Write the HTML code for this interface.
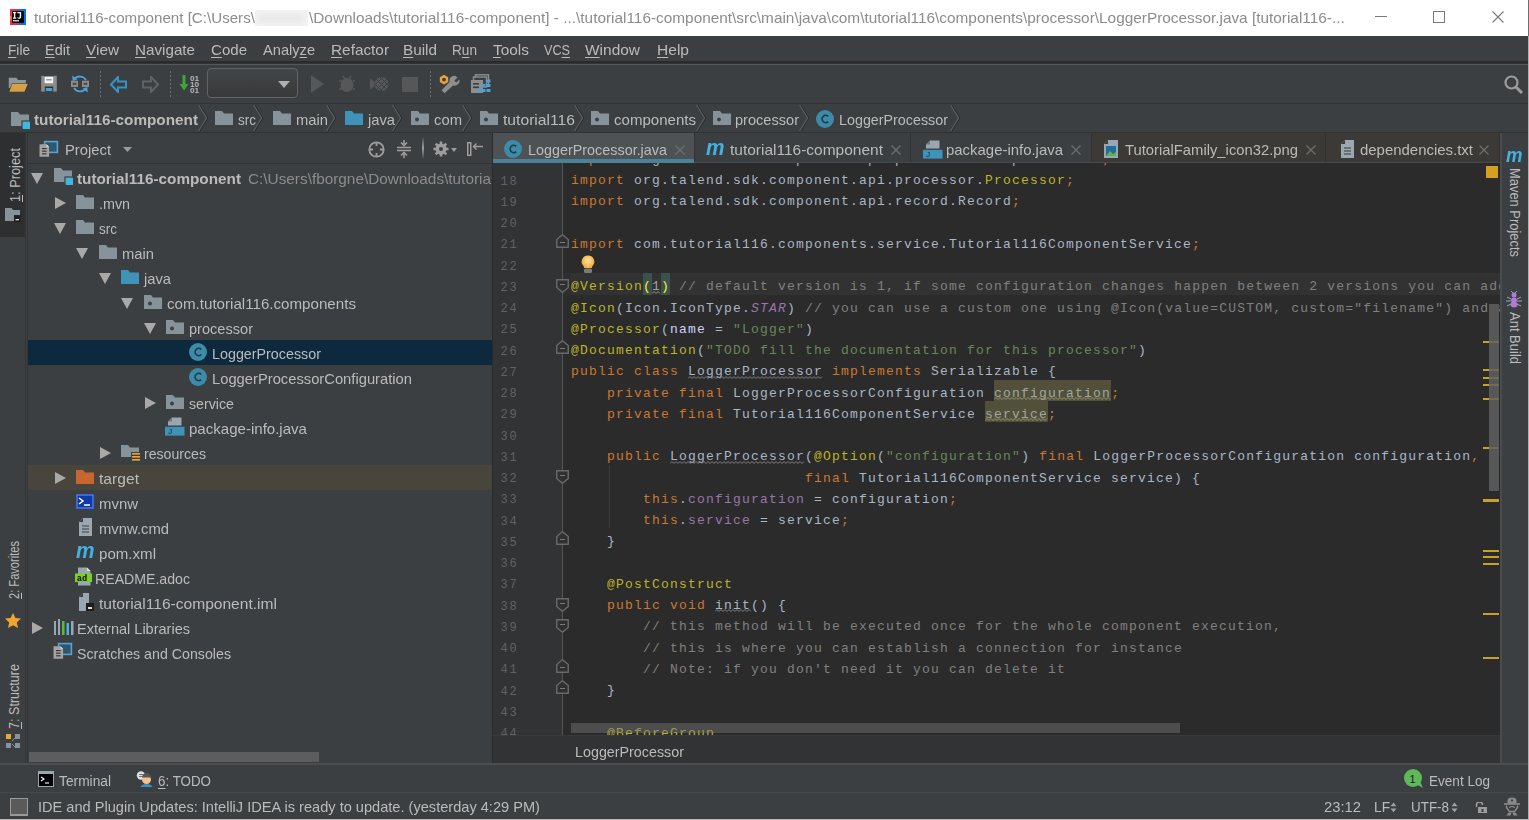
<!DOCTYPE html><html><head><meta charset="utf-8"><style>*{margin:0;padding:0}
html,body{width:1529px;height:820px;overflow:hidden;background:#3c3f41}
body{position:relative;font-family:"Liberation Sans",sans-serif}
body div,body svg{position:absolute;white-space:nowrap}
u{text-decoration:underline;text-underline-offset:2px}
.cl{font-family:"Liberation Mono",monospace;font-size:13px;line-height:15px;letter-spacing:1.2px;white-space:pre}
.wv{text-decoration:underline wavy #707070;text-decoration-thickness:1px;text-underline-offset:3px}
.un{background:#52503a;color:#9a9a88;text-decoration:underline wavy #807a50;text-underline-offset:3px}
</style></head><body><div style="left:0px;top:0px;width:1529px;height:36px;background:#ffffff;"></div>
<svg style="left:10px;top:9px;" width="16" height="16" viewBox="0 0 16 16"><rect x="0" y="0" width="16" height="16" fill="#ee2a5d"/><rect x="8" y="0" width="8" height="16" fill="#0a74f0"/><rect x="0" y="7" width="1.5" height="4" fill="#f28a1a"/><rect x="2" y="2" width="12" height="12" fill="#000"/><path d="M3 3h3.2v1.2H5.3v4.3h0.9v1.2H3V8.5h0.9V4.2H3z" fill="#f4f4f4"/><path d="M7.3 3h3.9v4.5c0 1.6-0.8 2.3-2.2 2.3-0.7 0-1.3-0.2-1.8-0.5l0.4-1.1c0.4 0.2 0.8 0.3 1.2 0.3 0.6 0 0.9-0.3 0.9-1.1V4.2H7.3z" fill="#f4f4f4"/><rect x="3" y="11.2" width="6" height="1.2" fill="#f4f4f4"/></svg>
<div style="left:34px;top:10px;font-family:'Liberation Sans', sans-serif;font-size:15px;line-height:15px;color:#8c8c8c;transform:scaleX(1.0089);transform-origin:0 0;">tutorial116-component [C:\Users\</div>
<div style="left:255px;top:10px;width:53px;height:16px;background:#f3f3f3;"></div>
<div style="left:258px;top:14px;width:46px;height:9px;background:#e9e9e9;filter:blur(2px)"></div>
<div style="left:309px;top:10px;font-family:'Liberation Sans', sans-serif;font-size:15px;line-height:15px;color:#8c8c8c;transform:scaleX(1.0244);transform-origin:0 0;">\Downloads\tutorial116-component] - ...\tutorial116-component\src\main\java\com\tutorial116\components\processor\LoggerProcessor.java [tutorial116-...</div>
<div style="left:1375px;top:16px;width:12px;height:1px;background:#7a7a7a;"></div>
<div style="left:1433px;top:11px;width:12px;height:12px;background:transparent;border:1px solid #7a7a7a;box-sizing:border-box"></div>
<svg style="left:1492px;top:11px;" width="12" height="12" viewBox="0 0 12 12"><path d="M0.5 0.5L11.5 11.5M11.5 0.5L0.5 11.5" stroke="#7a7a7a" stroke-width="1.1"/></svg>
<div style="left:1528px;top:0px;width:1px;height:36px;background:#6e6e6e;"></div>
<div style="left:1528px;top:36px;width:1px;height:784px;background:#b0b0b0;"></div>
<div style="left:0px;top:819px;width:1529px;height:1px;background:#b8b8b8;"></div>
<div style="left:0px;top:36px;width:1528px;height:25px;background:#3c3f41;"></div>
<div style="left:0px;top:61px;width:1528px;height:2px;background:#2b2b2b;"></div>
<div style="left:0px;top:63px;width:1528px;height:1px;background:#313335;"></div>
<div style="left:0px;top:64px;width:1528px;height:1px;background:#555759;"></div>
<div style="left:8px;top:42px;font-family:'Liberation Sans', sans-serif;font-size:15px;line-height:15px;color:#bbbbbb;transform:scaleX(0.9107);transform-origin:0 0;"><u>F</u>ile</div>
<div style="left:45px;top:42px;font-family:'Liberation Sans', sans-serif;font-size:15px;line-height:15px;color:#bbbbbb;transform:scaleX(0.9674);transform-origin:0 0;"><u>E</u>dit</div>
<div style="left:86px;top:42px;font-family:'Liberation Sans', sans-serif;font-size:15px;line-height:15px;color:#bbbbbb;transform:scaleX(1.0238);transform-origin:0 0;"><u>V</u>iew</div>
<div style="left:135px;top:42px;font-family:'Liberation Sans', sans-serif;font-size:15px;line-height:15px;color:#bbbbbb;transform:scaleX(1.0135);transform-origin:0 0;"><u>N</u>avigate</div>
<div style="left:211px;top:42px;font-family:'Liberation Sans', sans-serif;font-size:15px;line-height:15px;color:#bbbbbb;transform:scaleX(1.0039);transform-origin:0 0;"><u>C</u>ode</div>
<div style="left:263px;top:42px;font-family:'Liberation Sans', sans-serif;font-size:15px;line-height:15px;color:#bbbbbb;transform:scaleX(0.9745);transform-origin:0 0;">Analy<u>z</u>e</div>
<div style="left:331px;top:42px;font-family:'Liberation Sans', sans-serif;font-size:15px;line-height:15px;color:#bbbbbb;transform:scaleX(1.0229);transform-origin:0 0;"><u>R</u>efactor</div>
<div style="left:403px;top:42px;font-family:'Liberation Sans', sans-serif;font-size:15px;line-height:15px;color:#bbbbbb;transform:scaleX(1.0197);transform-origin:0 0;"><u>B</u>uild</div>
<div style="left:452px;top:42px;font-family:'Liberation Sans', sans-serif;font-size:15px;line-height:15px;color:#bbbbbb;transform:scaleX(0.9086);transform-origin:0 0;">R<u>u</u>n</div>
<div style="left:493px;top:42px;font-family:'Liberation Sans', sans-serif;font-size:15px;line-height:15px;color:#bbbbbb;transform:scaleX(1.0281);transform-origin:0 0;"><u>T</u>ools</div>
<div style="left:544px;top:42px;font-family:'Liberation Sans', sans-serif;font-size:15px;line-height:15px;color:#bbbbbb;transform:scaleX(0.8434);transform-origin:0 0;">VC<u>S</u></div>
<div style="left:585px;top:42px;font-family:'Liberation Sans', sans-serif;font-size:15px;line-height:15px;color:#bbbbbb;transform:scaleX(1.0310);transform-origin:0 0;"><u>W</u>indow</div>
<div style="left:657px;top:42px;font-family:'Liberation Sans', sans-serif;font-size:15px;line-height:15px;color:#bbbbbb;transform:scaleX(1.0375);transform-origin:0 0;"><u>H</u>elp</div>
<div style="left:0px;top:65px;width:1528px;height:38px;background:#3c3f41;"></div>
<div style="left:0px;top:103px;width:1528px;height:1px;background:#323232;"></div>
<svg style="left:8px;top:77px;" width="21" height="16" viewBox="0 0 21 16"><path d="M0.8 0.8h7.5l1.8 2.2h7.8v8H0.8z" fill="#8d979e"/><path d="M4 6.2h16.6l-3.8 8.6H0.6z" fill="#2f3133"/><path d="M4.3 6.7h15.6l-3.4 8H1.3z" fill="#d6a044"/></svg>
<svg style="left:41px;top:75px;" width="16" height="17" viewBox="0 0 16 17"><rect x="0.2" y="0.8" width="15.6" height="15.8" fill="#8c8c8c"/><rect x="3.6" y="1.2" width="8.6" height="7" fill="#f2f2f2"/><rect x="3" y="0.6" width="9.8" height="0.8" fill="#2f3133"/><rect x="5.2" y="4" width="5.4" height="1.5" fill="#9a9a9a"/><rect x="3.8" y="11.5" width="8.4" height="5.2" fill="#2f3133"/><rect x="4.8" y="13" width="6.4" height="3" fill="#4aa0d8"/></svg>
<svg style="left:70px;top:74px;" width="20" height="20" viewBox="0 0 20 20"><path d="M4.2 5.2A7 6.6 0 0 1 16 6" stroke="#4aa0d8" stroke-width="1.8" fill="none"/><path d="M15.8 14.6A7 6.6 0 0 1 4 14" stroke="#4aa0d8" stroke-width="1.8" fill="none"/><path d="M2.2 1.5l0.5 5.5 4.8-1.8z" fill="#4aa0d8"/><path d="M17.8 18.5l-0.5-5.5-4.8 1.8z" fill="#4aa0d8"/><rect x="1" y="6.7" width="7" height="6.3" fill="#8a8a8a"/><rect x="2.7" y="8.8" width="3.6" height="2" fill="#4a4a4a"/><rect x="12" y="6.7" width="7" height="6.3" fill="#8a8a8a"/><rect x="13.7" y="8.8" width="3.6" height="2" fill="#4a4a4a"/></svg>
<div style="left:100px;top:71px;width:1px;height:27px;background:repeating-linear-gradient(#6e7072 0 2px, transparent 2px 4px)"></div>
<svg style="left:110px;top:76px;" width="17" height="17" viewBox="0 0 17 17"><path d="M8 1L1 8.5 8 16V11.5h8v-6H8z" fill="none" stroke="#3592c4" stroke-width="2"/></svg>
<svg style="left:142px;top:76px;" width="17" height="17" viewBox="0 0 17 17"><path d="M9 1l7 7.5L9 16V11.5H1v-6h8z" fill="none" stroke="#606263" stroke-width="2"/></svg>
<div style="left:170px;top:71px;width:1px;height:27px;background:repeating-linear-gradient(#6e7072 0 2px, transparent 2px 4px)"></div>
<svg style="left:179px;top:74px;" width="22" height="20" viewBox="0 0 22 20"><path d="M3.5 1h3v9h3l-4.5 6.5L0.5 10h3z" fill="#3ca53c"/><g font-family="Liberation Sans" font-weight="bold" font-size="7" fill="#b4b4b4"><text x="11" y="6.6" textLength="9" lengthAdjust="spacingAndGlyphs">01</text><text x="11" y="12.8" textLength="9" lengthAdjust="spacingAndGlyphs">10</text><text x="11" y="19" textLength="9" lengthAdjust="spacingAndGlyphs">01</text></g></svg>
<div style="left:207px;top:68px;width:91px;height:30px;box-sizing:border-box;border:1px solid #646464;border-radius:4px;background:linear-gradient(#434648,#37393b)"></div>
<svg style="left:278px;top:81px;" width="12" height="8" viewBox="0 0 12 8"><path d="M0 0h12L6 7z" fill="#b0b0b0"/></svg>
<svg style="left:311px;top:75px;" width="14" height="18" viewBox="0 0 14 18"><path d="M0 0L13 9 0 18z" fill="#555759"/></svg>
<svg style="left:338px;top:74px;" width="20" height="20" viewBox="0 0 20 20"><ellipse cx="9" cy="11" rx="6.5" ry="7" fill="#555759"/><path d="M11 4a7 7 0 0 1 0 14" stroke="#3c3f41" stroke-width="1.5" fill="none"/><path d="M5 2l2 3M13 2l-2 3M1 7h3M1 15h3M17 7h-2M17 15h-2" stroke="#555759" stroke-width="1.5"/></svg>
<svg style="left:370px;top:75px;" width="19" height="18" viewBox="0 0 19 18"><path d="M0 3L7 9 0 15z" fill="#555759"/><circle cx="11.5" cy="9" r="7" fill="#555759"/><path d="M6 4l11 11M10 2l8 8M4 8l8 8M17 4L6 15M13 2L4 11M18 8l-8 8" stroke="#3c3f41" stroke-width="1"/></svg>
<div style="left:402px;top:77px;width:16px;height:15px;background:#555759;"></div>
<div style="left:430px;top:71px;width:1px;height:27px;background:repeating-linear-gradient(#6e7072 0 2px, transparent 2px 4px)"></div>
<svg style="left:439px;top:74px;" width="21" height="20" viewBox="0 0 21 20"><path d="M18.5 3.5l-3.2 3.2 1.9 1.9 3.2-3.2a5 5 0 0 1-6.3 6.1L5.5 19.2 2.6 16.3l7.9-8.4a5 5 0 0 1 6-6z" fill="#8e8e8e"/><path d="M5 0.8l4.2 2.4v4.8L5 10.4 0.8 8V3.2z" fill="#e8a33a"/><circle cx="5" cy="5.6" r="1.9" fill="#3c3f41"/></svg>
<svg style="left:471px;top:74px;" width="20" height="20" viewBox="0 0 20 20"><rect x="4.5" y="0.8" width="13" height="10" fill="none" stroke="#8e8e8e" stroke-width="1.4"/><rect x="2.5" y="3" width="13" height="10" fill="#3c3f41" stroke="#8e8e8e" stroke-width="1.4"/><rect x="0" y="6" width="12" height="13" fill="#8e8e8e"/><rect x="2" y="9" width="6" height="1.6" fill="#3c3f41"/><rect x="2" y="12.5" width="6" height="1.6" fill="#3c3f41"/><g fill="#4aa0d8"><rect x="15.5" y="5.5" width="4" height="3"/><rect x="10.5" y="10" width="4" height="3"/><rect x="15.5" y="10" width="4" height="3"/><rect x="6" y="15" width="4" height="3"/><rect x="10.5" y="15" width="4" height="3"/><rect x="15.5" y="15" width="4" height="3"/></g></svg>
<svg style="left:1504px;top:75px;" width="20" height="20" viewBox="0 0 20 20"><circle cx="7.5" cy="7.5" r="6" stroke="#9d9d9d" stroke-width="2.2" fill="none"/><path d="M12 12l6 6" stroke="#9d9d9d" stroke-width="3"/></svg>
<div style="left:0px;top:104px;width:1528px;height:28px;background:#3c3f41;"></div>
<div style="left:0px;top:132px;width:1528px;height:1px;background:#323232;"></div>
<svg style="left:11px;top:112px;" width="19" height="17" viewBox="0 0 19 17"><path d="M0 0h7l2 2.5h9V11h-6v3H0z" fill="#87939a"/><rect x="11" y="9" width="8" height="8" fill="#40b6e0"/><rect x="11" y="9" width="8" height="8" fill="none" stroke="#3c3f41" stroke-width="1.2"/><rect x="12" y="10" width="7" height="7" fill="#40b6e0"/></svg>
<div style="left:34px;top:112px;font-family:'Liberation Sans', sans-serif;font-size:15px;line-height:15px;color:#bbbbbb;font-weight:bold;transform:scaleX(1.0195);transform-origin:0 0;">tutorial116-component</div>
<svg style="left:198px;top:104px;" width="12" height="28" viewBox="0 0 12 28"><path d="M1.7 1L9.7 14.0L1.7 27" stroke="#2a2c2e" stroke-width="1.3" fill="none"/><path d="M0.6 1L8.6 14.0L0.6 27" stroke="#5c5e60" stroke-width="1.2" fill="none"/></svg>
<svg style="left:215px;top:111px;" width="18" height="14" viewBox="0 0 18 14"><path d="M0 0h7l2 2.5h9V14H0z" fill="#87939a"/></svg>
<div style="left:238px;top:112px;font-family:'Liberation Sans', sans-serif;font-size:15px;line-height:15px;color:#bbbbbb;transform:scaleX(0.9000);transform-origin:0 0;">src</div>
<svg style="left:253px;top:104px;" width="12" height="28" viewBox="0 0 12 28"><path d="M1.7 1L9.7 14.0L1.7 27" stroke="#2a2c2e" stroke-width="1.3" fill="none"/><path d="M0.6 1L8.6 14.0L0.6 27" stroke="#5c5e60" stroke-width="1.2" fill="none"/></svg>
<svg style="left:273px;top:111px;" width="18" height="14" viewBox="0 0 18 14"><path d="M0 0h7l2 2.5h9V14H0z" fill="#87939a"/></svg>
<div style="left:296px;top:112px;font-family:'Liberation Sans', sans-serif;font-size:15px;line-height:15px;color:#bbbbbb;transform:scaleX(0.9841);transform-origin:0 0;">main</div>
<svg style="left:326px;top:104px;" width="12" height="28" viewBox="0 0 12 28"><path d="M1.7 1L9.7 14.0L1.7 27" stroke="#2a2c2e" stroke-width="1.3" fill="none"/><path d="M0.6 1L8.6 14.0L0.6 27" stroke="#5c5e60" stroke-width="1.2" fill="none"/></svg>
<svg style="left:345px;top:111px;" width="18" height="14" viewBox="0 0 18 14"><path d="M0 0h7l2 2.5h9V14H0z" fill="#3f93b8"/></svg>
<div style="left:368px;top:112px;font-family:'Liberation Sans', sans-serif;font-size:15px;line-height:15px;color:#bbbbbb;transform:scaleX(0.9813);transform-origin:0 0;">java</div>
<svg style="left:392px;top:104px;" width="12" height="28" viewBox="0 0 12 28"><path d="M1.7 1L9.7 14.0L1.7 27" stroke="#2a2c2e" stroke-width="1.3" fill="none"/><path d="M0.6 1L8.6 14.0L0.6 27" stroke="#5c5e60" stroke-width="1.2" fill="none"/></svg>
<svg style="left:411px;top:111px;" width="18" height="14" viewBox="0 0 18 14"><path d="M0 0h7l2 2.5h9V14H0z" fill="#87939a"/><circle cx="6" cy="8.5" r="1.9" fill="#3c3f41"/></svg>
<div style="left:434px;top:112px;font-family:'Liberation Sans', sans-serif;font-size:15px;line-height:15px;color:#bbbbbb;transform:scaleX(0.9879);transform-origin:0 0;">com</div>
<svg style="left:462px;top:104px;" width="12" height="28" viewBox="0 0 12 28"><path d="M1.7 1L9.7 14.0L1.7 27" stroke="#2a2c2e" stroke-width="1.3" fill="none"/><path d="M0.6 1L8.6 14.0L0.6 27" stroke="#5c5e60" stroke-width="1.2" fill="none"/></svg>
<svg style="left:480px;top:111px;" width="18" height="14" viewBox="0 0 18 14"><path d="M0 0h7l2 2.5h9V14H0z" fill="#87939a"/><circle cx="6" cy="8.5" r="1.9" fill="#3c3f41"/></svg>
<div style="left:503px;top:112px;font-family:'Liberation Sans', sans-serif;font-size:15px;line-height:15px;color:#bbbbbb;transform:scaleX(1.0442);transform-origin:0 0;">tutorial116</div>
<svg style="left:574px;top:104px;" width="12" height="28" viewBox="0 0 12 28"><path d="M1.7 1L9.7 14.0L1.7 27" stroke="#2a2c2e" stroke-width="1.3" fill="none"/><path d="M0.6 1L8.6 14.0L0.6 27" stroke="#5c5e60" stroke-width="1.2" fill="none"/></svg>
<svg style="left:591px;top:111px;" width="18" height="14" viewBox="0 0 18 14"><path d="M0 0h7l2 2.5h9V14H0z" fill="#87939a"/><circle cx="6" cy="8.5" r="1.9" fill="#3c3f41"/></svg>
<div style="left:614px;top:112px;font-family:'Liberation Sans', sans-serif;font-size:15px;line-height:15px;color:#bbbbbb;transform:scaleX(1.0032);transform-origin:0 0;">components</div>
<svg style="left:696px;top:104px;" width="12" height="28" viewBox="0 0 12 28"><path d="M1.7 1L9.7 14.0L1.7 27" stroke="#2a2c2e" stroke-width="1.3" fill="none"/><path d="M0.6 1L8.6 14.0L0.6 27" stroke="#5c5e60" stroke-width="1.2" fill="none"/></svg>
<svg style="left:713px;top:111px;" width="18" height="14" viewBox="0 0 18 14"><path d="M0 0h7l2 2.5h9V14H0z" fill="#87939a"/><circle cx="6" cy="8.5" r="1.9" fill="#3c3f41"/></svg>
<div style="left:735px;top:112px;font-family:'Liberation Sans', sans-serif;font-size:15px;line-height:15px;color:#bbbbbb;transform:scaleX(0.9715);transform-origin:0 0;">processor</div>
<svg style="left:799px;top:104px;" width="12" height="28" viewBox="0 0 12 28"><path d="M1.7 1L9.7 14.0L1.7 27" stroke="#2a2c2e" stroke-width="1.3" fill="none"/><path d="M0.6 1L8.6 14.0L0.6 27" stroke="#5c5e60" stroke-width="1.2" fill="none"/></svg>
<svg style="left:816px;top:110px;" width="18" height="18" viewBox="0 0 18 18"><circle cx="9.0" cy="9.0" r="9.0" fill="#3d8aa9"/><path d="M12.2 6.4A3.6 3.6 0 1 0 12.2 11.6" stroke="#1e3c48" stroke-width="1.7" fill="none"/></svg>
<div style="left:839px;top:112px;font-family:'Liberation Sans', sans-serif;font-size:15px;line-height:15px;color:#bbbbbb;transform:scaleX(0.9540);transform-origin:0 0;">LoggerProcessor</div>
<svg style="left:950px;top:104px;" width="12" height="28" viewBox="0 0 12 28"><path d="M1.7 1L9.7 14.0L1.7 27" stroke="#2a2c2e" stroke-width="1.3" fill="none"/><path d="M0.6 1L8.6 14.0L0.6 27" stroke="#5c5e60" stroke-width="1.2" fill="none"/></svg>
<div style="left:0px;top:133px;width:28px;height:632px;background:#3c3f41;"></div>
<div style="left:25px;top:133px;width:1px;height:632px;background:#333537;"></div>
<div style="left:27px;top:133px;width:1px;height:632px;background:#333537;"></div>
<div style="left:0px;top:133px;width:25px;height:104px;background:#2d2f30;"></div>
<div style="left:8.3px;top:202px;font-family:'Liberation Sans';font-size:14px;line-height:14px;color:#bbbbbb;white-space:nowrap;transform-origin:0 0;transform:rotate(-90deg) scaleX(0.9133)"><u>1</u>: Project</div>
<svg style="left:5px;top:208px;" width="16" height="15" viewBox="0 0 16 15"><path d="M0 0h6.5l1.5 2H15v5H9v6H0z" fill="#87939a"/><rect x="9" y="7.5" width="6.5" height="6.5" fill="#1f1f1f"/><rect x="10.5" y="11" width="3.5" height="1.3" fill="#e0e0e0"/></svg>
<div style="left:7.3px;top:599px;font-family:'Liberation Sans';font-size:14px;line-height:14px;color:#bbbbbb;white-space:nowrap;transform-origin:0 0;transform:rotate(-90deg) scaleX(0.7933)"><u>2</u>: Favorites</div>
<svg style="left:5px;top:613px;" width="16" height="15" viewBox="0 0 16 15"><path d="M8 0l2.4 5 5.6.6-4.2 3.8 1.2 5.6L8 12.2 3 15l1.2-5.6L0 5.6 5.6 5z" fill="#f0a732"/></svg>
<div style="left:7.3px;top:729px;font-family:'Liberation Sans';font-size:14px;line-height:14px;color:#bbbbbb;white-space:nowrap;transform-origin:0 0;transform:rotate(-90deg) scaleX(0.8985)"><u>7</u>: Structure</div>
<svg style="left:6px;top:734px;" width="15" height="15" viewBox="0 0 15 15"><rect x="0" y="0" width="5" height="5" fill="#f0a732"/><rect x="9" y="0" width="5" height="5" fill="#87939a"/><rect x="0" y="9" width="5" height="5" fill="#87939a"/><rect x="9" y="9" width="5" height="5" fill="#87939a"/><path d="M6 7l3-3M6 10l3 3" stroke="#87939a" stroke-width="1"/></svg>
<div style="left:28px;top:133px;width:464px;height:632px;background:#3c3f41;"></div>
<div style="left:492px;top:133px;width:1px;height:632px;background:#2b2b2b;"></div>
<div style="left:28px;top:163px;width:463px;height:1px;background:#323232;"></div>
<svg style="left:39px;top:140px;" width="20" height="17" viewBox="0 0 20 17"><rect x="5.6" y="1.6" width="12.8" height="10.8" fill="#2d5670" stroke="#5aa2d2" stroke-width="1.6"/><path d="M0.5 4.2h7l2.6 2.6v9.9H0.5z" fill="#a2a2a2"/><path d="M7.5 4.2v2.6h2.6z" fill="#e0e0e0"/><g fill="#3a3a3a"><rect x="3" y="8" width="4.6" height="1.2"/><rect x="3" y="10.6" width="4.6" height="1.2"/><rect x="3" y="13.2" width="4.6" height="1.2"/></g></svg>
<div style="left:65px;top:142px;font-family:'Liberation Sans', sans-serif;font-size:15px;line-height:15px;color:#bbbbbb;transform:scaleX(0.9853);transform-origin:0 0;">Project</div>
<svg style="left:123px;top:147px;" width="9" height="5" viewBox="0 0 9 5"><path d="M0 0h9L4.5 5z" fill="#9b9b9b"/></svg>
<svg style="left:368px;top:141px;" width="17" height="17" viewBox="0 0 17 17"><circle cx="8.5" cy="8.5" r="7.2" stroke="#9d9d9d" stroke-width="1.8" fill="none"/><path d="M8.5 1v4M8.5 12v4M1 8.5h4M12 8.5h4" stroke="#9d9d9d" stroke-width="1.8"/></svg>
<svg style="left:397px;top:140px;" width="14" height="18" viewBox="0 0 14 18"><path d="M0 7.5h14M0 10.5h14" stroke="#9d9d9d" stroke-width="1.5"/><path d="M7 0v4M4 2.5l3 3 3-3M7 18v-4M4 15.5l3-3 3 3" stroke="#9d9d9d" stroke-width="1.6" fill="none"/></svg>
<div style="left:422px;top:137px;width:2px;height:22px;background:linear-gradient(#3c3f41,#9d9d9d,#3c3f41)"></div>
<svg style="left:433px;top:141px;" width="16" height="16" viewBox="0 0 16 16"><circle cx="8" cy="8" r="5.5" fill="#9d9d9d"/><path d="M8 0.5v15M0.5 8h15M2.7 2.7l10.6 10.6M13.3 2.7L2.7 13.3" stroke="#9d9d9d" stroke-width="2.6"/><circle cx="8" cy="8" r="2" fill="#3c3f41"/></svg>
<svg style="left:451px;top:148px;" width="6" height="4" viewBox="0 0 6 4"><path d="M0 0h6L3 4z" fill="#9d9d9d"/></svg>
<svg style="left:467px;top:142px;" width="17" height="14" viewBox="0 0 17 14"><rect x="0.75" y="0.75" width="3" height="12.5" stroke="#9d9d9d" stroke-width="1.5" fill="none"/><path d="M6 4.5h10M9.5 1.5L6.5 4.5l3 3" stroke="#9d9d9d" stroke-width="1.4" fill="none"/></svg>
<div style="left:28px;top:340px;width:464px;height:25px;background:#0d293e;"></div>
<div style="left:28px;top:465px;width:464px;height:25px;background:#48453d;"></div>
<svg style="left:31px;top:173px;" width="12" height="11" viewBox="0 0 12 11"><path d="M0 0h12L6 11z" fill="#a9a9a9"/></svg>
<svg style="left:54px;top:168px;" width="19" height="17" viewBox="0 0 19 17"><path d="M0 0h7l2 2.5h9V11h-6v3H0z" fill="#87939a"/><rect x="11" y="9" width="8" height="8" fill="#40b6e0"/><rect x="11" y="9" width="8" height="8" fill="none" stroke="#3c3f41" stroke-width="1.2"/><rect x="12" y="10" width="7" height="7" fill="#40b6e0"/></svg>
<div style="left:77px;top:171px;font-family:'Liberation Sans', sans-serif;font-size:15px;line-height:15px;color:#bbbbbb;font-weight:bold;transform:scaleX(1.0195);transform-origin:0 0;">tutorial116-component</div>
<div style="left:248px;top:171px;font-family:'Liberation Sans', sans-serif;font-size:15px;line-height:15px;color:#8c8c8c;transform:scaleX(1.0225);transform-origin:0 0;">C:\Users\fborgne\Downloads\tutoria</div>
<svg style="left:55px;top:197px;" width="11" height="12" viewBox="0 0 11 12"><path d="M0 0L11 6 0 12z" fill="#a9a9a9"/></svg>
<svg style="left:76px;top:195px;" width="18" height="14" viewBox="0 0 18 14"><path d="M0 0h7l2 2.5h9V14H0z" fill="#87939a"/></svg>
<div style="left:98.5px;top:196px;font-family:'Liberation Sans', sans-serif;font-size:15px;line-height:15px;color:#bbbbbb;transform:scaleX(0.9534);transform-origin:0 0;">.mvn</div>
<svg style="left:54px;top:223px;" width="12" height="11" viewBox="0 0 12 11"><path d="M0 0h12L6 11z" fill="#a9a9a9"/></svg>
<svg style="left:76px;top:220px;" width="18" height="14" viewBox="0 0 18 14"><path d="M0 0h7l2 2.5h9V14H0z" fill="#87939a"/></svg>
<div style="left:98.5px;top:221px;font-family:'Liberation Sans', sans-serif;font-size:15px;line-height:15px;color:#bbbbbb;transform:scaleX(0.9000);transform-origin:0 0;">src</div>
<svg style="left:76px;top:248px;" width="12" height="11" viewBox="0 0 12 11"><path d="M0 0h12L6 11z" fill="#a9a9a9"/></svg>
<svg style="left:99px;top:245px;" width="18" height="14" viewBox="0 0 18 14"><path d="M0 0h7l2 2.5h9V14H0z" fill="#87939a"/></svg>
<div style="left:121.5px;top:246px;font-family:'Liberation Sans', sans-serif;font-size:15px;line-height:15px;color:#bbbbbb;transform:scaleX(0.9841);transform-origin:0 0;">main</div>
<svg style="left:99px;top:273px;" width="12" height="11" viewBox="0 0 12 11"><path d="M0 0h12L6 11z" fill="#a9a9a9"/></svg>
<svg style="left:121px;top:270px;" width="18" height="14" viewBox="0 0 18 14"><path d="M0 0h7l2 2.5h9V14H0z" fill="#3f93b8"/></svg>
<div style="left:143.5px;top:271px;font-family:'Liberation Sans', sans-serif;font-size:15px;line-height:15px;color:#bbbbbb;transform:scaleX(0.9813);transform-origin:0 0;">java</div>
<svg style="left:121px;top:298px;" width="12" height="11" viewBox="0 0 12 11"><path d="M0 0h12L6 11z" fill="#a9a9a9"/></svg>
<svg style="left:144px;top:295px;" width="18" height="14" viewBox="0 0 18 14"><path d="M0 0h7l2 2.5h9V14H0z" fill="#87939a"/><circle cx="6" cy="8.5" r="1.9" fill="#3c3f41"/></svg>
<div style="left:166.5px;top:296px;font-family:'Liberation Sans', sans-serif;font-size:15px;line-height:15px;color:#bbbbbb;transform:scaleX(1.0087);transform-origin:0 0;">com.tutorial116.components</div>
<svg style="left:144px;top:323px;" width="12" height="11" viewBox="0 0 12 11"><path d="M0 0h12L6 11z" fill="#a9a9a9"/></svg>
<svg style="left:166px;top:320px;" width="18" height="14" viewBox="0 0 18 14"><path d="M0 0h7l2 2.5h9V14H0z" fill="#87939a"/><circle cx="6" cy="8.5" r="1.9" fill="#3c3f41"/></svg>
<div style="left:188.5px;top:321px;font-family:'Liberation Sans', sans-serif;font-size:15px;line-height:15px;color:#bbbbbb;transform:scaleX(0.9715);transform-origin:0 0;">processor</div>
<svg style="left:189px;top:343px;" width="18" height="18" viewBox="0 0 18 18"><circle cx="9.0" cy="9.0" r="9.0" fill="#3d8aa9"/><path d="M12.2 6.4A3.6 3.6 0 1 0 12.2 11.6" stroke="#1e3c48" stroke-width="1.7" fill="none"/></svg>
<div style="left:211.5px;top:346px;font-family:'Liberation Sans', sans-serif;font-size:15px;line-height:15px;color:#bbbbbb;transform:scaleX(0.9540);transform-origin:0 0;">LoggerProcessor</div>
<svg style="left:189px;top:368px;" width="18" height="18" viewBox="0 0 18 18"><circle cx="9.0" cy="9.0" r="9.0" fill="#3d8aa9"/><path d="M12.2 6.4A3.6 3.6 0 1 0 12.2 11.6" stroke="#1e3c48" stroke-width="1.7" fill="none"/></svg>
<div style="left:211.5px;top:371px;font-family:'Liberation Sans', sans-serif;font-size:15px;line-height:15px;color:#bbbbbb;transform:scaleX(0.9829);transform-origin:0 0;">LoggerProcessorConfiguration</div>
<svg style="left:145px;top:397px;" width="11" height="12" viewBox="0 0 11 12"><path d="M0 0L11 6 0 12z" fill="#a9a9a9"/></svg>
<svg style="left:166px;top:395px;" width="18" height="14" viewBox="0 0 18 14"><path d="M0 0h7l2 2.5h9V14H0z" fill="#87939a"/><circle cx="6" cy="8.5" r="1.9" fill="#3c3f41"/></svg>
<div style="left:188.5px;top:396px;font-family:'Liberation Sans', sans-serif;font-size:15px;line-height:15px;color:#bbbbbb;transform:scaleX(0.9471);transform-origin:0 0;">service</div>
<svg style="left:165px;top:417px;" width="20" height="19" viewBox="0 0 20 19"><path d="M7 0.5h9.5v8H3V4.5z" fill="#9aa7b0"/><path d="M3 4.5h4v-4z" fill="#6d777d"/><rect x="0" y="9.8" width="19.5" height="8.8" fill="#3e93b8"/><text x="3.2" y="17.3" font-family="Liberation Sans" font-size="8" fill="#1f2d36">J</text></svg>
<div style="left:188.5px;top:421px;font-family:'Liberation Sans', sans-serif;font-size:15px;line-height:15px;color:#bbbbbb;transform:scaleX(1.0035);transform-origin:0 0;">package-info.java</div>
<svg style="left:100px;top:447px;" width="11" height="12" viewBox="0 0 11 12"><path d="M0 0L11 6 0 12z" fill="#a9a9a9"/></svg>
<svg style="left:121px;top:443px;" width="20" height="18" viewBox="0 0 20 18"><path d="M0 2h7l2 2.5h9V14H0z" fill="#87939a"/><rect x="10" y="9" width="9" height="9" fill="#3c3f41"/><g fill="#f0a732"><rect x="11" y="10" width="8" height="1.6"/><rect x="11" y="13" width="8" height="1.6"/><rect x="11" y="16" width="8" height="1.6"/></g></svg>
<div style="left:143.5px;top:446px;font-family:'Liberation Sans', sans-serif;font-size:15px;line-height:15px;color:#bbbbbb;transform:scaleX(0.9412);transform-origin:0 0;">resources</div>
<svg style="left:55px;top:472px;" width="11" height="12" viewBox="0 0 11 12"><path d="M0 0L11 6 0 12z" fill="#a9a9a9"/></svg>
<svg style="left:76px;top:470px;" width="18" height="14" viewBox="0 0 18 14"><path d="M0 0h7l2 2.5h9V14H0z" fill="#c86632"/></svg>
<div style="left:98.5px;top:471px;font-family:'Liberation Sans', sans-serif;font-size:15px;line-height:15px;color:#bbbbbb;transform:scaleX(1.0423);transform-origin:0 0;">target</div>
<svg style="left:76px;top:494px;" width="18" height="15" viewBox="0 0 18 15"><rect x="0" y="0" width="18" height="15" fill="#3b63cc"/><rect x="1.2" y="1.2" width="15.6" height="12.6" fill="#0e3aa8" stroke="#6a8ef0" stroke-width="0.6"/><path d="M3 4l4 3-4 3" stroke="#fff" stroke-width="1.5" fill="none"/><path d="M8 11h6" stroke="#fff" stroke-width="1.5"/></svg>
<div style="left:98.5px;top:496px;font-family:'Liberation Sans', sans-serif;font-size:15px;line-height:15px;color:#bbbbbb;transform:scaleX(0.9956);transform-origin:0 0;">mvnw</div>
<svg style="left:79px;top:518px;" width="13" height="18" viewBox="0 0 13 18"><path d="M4 0h9v18H0V4z" fill="#9aa7b0"/><path d="M0 4h4V0z" fill="#3c3f41"/><g stroke="#3c3f41" stroke-width="1.2"><path d="M3 8h7M3 11h7M3 14h7"/></g></svg>
<div style="left:98.5px;top:521px;font-family:'Liberation Sans', sans-serif;font-size:15px;line-height:15px;color:#bbbbbb;transform:scaleX(0.9879);transform-origin:0 0;">mvnw.cmd</div>
<div style="left:76px;top:540px;font-family:'Liberation Sans', sans-serif;font-size:22px;line-height:22px;color:#43b2e2;font-weight:bold;transform:scaleX(0.9457);transform-origin:0 0;font-style:italic;">m</div>
<div style="left:98.5px;top:546px;font-family:'Liberation Sans', sans-serif;font-size:15px;line-height:15px;color:#bbbbbb;transform:scaleX(1.0055);transform-origin:0 0;">pom.xml</div>
<svg style="left:75px;top:567px;" width="17" height="19" viewBox="0 0 17 19"><path d="M3 0.5h9l3.5 3.5v14.5H3z" fill="#9aa7b0"/><path d="M12 0.5v3.5h3.5z" fill="#e0e0e0"/><rect x="0" y="6.5" width="17" height="8.5" fill="#7fcf2a"/><text x="1.8" y="13.8" font-family="Liberation Mono" font-weight="bold" font-size="8.5" fill="#111">ad</text></svg>
<div style="left:95px;top:571px;font-family:'Liberation Sans', sans-serif;font-size:15px;line-height:15px;color:#bbbbbb;transform:scaleX(0.9419);transform-origin:0 0;">README.adoc</div>
<svg style="left:79px;top:593px;" width="15" height="18" viewBox="0 0 15 18"><path d="M4 0h6v18H0V4z" fill="#9aa7b0"/><path d="M0 4h4V0z" fill="#3c3f41"/><rect x="7" y="10" width="8" height="8" fill="#1e1e1e"/><rect x="9" y="14" width="4" height="2" fill="#ddd"/></svg>
<div style="left:98.5px;top:596px;font-family:'Liberation Sans', sans-serif;font-size:15px;line-height:15px;color:#bbbbbb;transform:scaleX(1.0378);transform-origin:0 0;">tutorial116-component.iml</div>
<svg style="left:32px;top:622px;" width="11" height="12" viewBox="0 0 11 12"><path d="M0 0L11 6 0 12z" fill="#a9a9a9"/></svg>
<svg style="left:54px;top:618px;" width="20" height="18" viewBox="0 0 20 18"><rect x="0" y="3" width="2" height="14" fill="#9aa7b0"/><rect x="4" y="1" width="2" height="16" fill="#9aa7b0"/><rect x="8" y="3" width="2.5" height="14" fill="#62b543"/><rect x="12.5" y="5" width="2.5" height="12" fill="#40b6e0"/><rect x="17" y="3" width="2.5" height="14" fill="#9aa7b0"/></svg>
<div style="left:77px;top:621px;font-family:'Liberation Sans', sans-serif;font-size:15px;line-height:15px;color:#bbbbbb;transform:scaleX(0.9680);transform-origin:0 0;">External Libraries</div>
<svg style="left:53px;top:642px;" width="20" height="17" viewBox="0 0 20 17"><rect x="5.6" y="1.6" width="12.8" height="10.8" fill="#2d5670" stroke="#5aa2d2" stroke-width="1.6"/><path d="M0.5 4.2h7l2.6 2.6v9.9H0.5z" fill="#a2a2a2"/><path d="M7.5 4.2v2.6h2.6z" fill="#e0e0e0"/><g fill="#3a3a3a"><rect x="3" y="8" width="4.6" height="1.2"/><rect x="3" y="10.6" width="4.6" height="1.2"/><rect x="3" y="13.2" width="4.6" height="1.2"/></g></svg>
<div style="left:77px;top:646px;font-family:'Liberation Sans', sans-serif;font-size:15px;line-height:15px;color:#bbbbbb;transform:scaleX(0.9471);transform-origin:0 0;">Scratches and Consoles</div>
<div style="left:29px;top:752px;width:290px;height:10px;background:#5c5d5e;"></div>
<div style="left:493px;top:133px;width:1007px;height:30px;background:#3c3f41;"></div>
<div style="left:493px;top:133px;width:201px;height:26px;background:#4e5254;"></div>
<div style="left:493px;top:159px;width:201px;height:4px;background:#4b8299;"></div>
<div style="left:1091px;top:133px;width:409px;height:30px;background:#3b3a36;"></div>
<div style="left:694px;top:133px;width:1px;height:30px;background:#323232;"></div>
<div style="left:910px;top:133px;width:1px;height:30px;background:#323232;"></div>
<div style="left:1091px;top:133px;width:1px;height:30px;background:#323232;"></div>
<div style="left:1325px;top:133px;width:1px;height:30px;background:#323232;"></div>
<div style="left:1499px;top:133px;width:2px;height:30px;background:#323232;"></div>
<div style="left:694px;top:162px;width:806px;height:1px;background:#46484a;"></div>
<svg style="left:504px;top:140px;" width="18" height="18" viewBox="0 0 18 18"><circle cx="9.0" cy="9.0" r="9.0" fill="#3d8aa9"/><path d="M12.2 6.4A3.6 3.6 0 1 0 12.2 11.6" stroke="#1e3c48" stroke-width="1.7" fill="none"/></svg>
<div style="left:528px;top:142px;font-family:'Liberation Sans', sans-serif;font-size:15px;line-height:15px;color:#bbbbbb;transform:scaleX(0.9579);transform-origin:0 0;">LoggerProcessor.java</div>
<svg style="left:675px;top:145px;" width="10" height="10" viewBox="0 0 10 10"><path d="M0.5 0.5l9 9M9.5 0.5l-9 9" stroke="#6e6e6e" stroke-width="1.3"/></svg>
<div style="left:706px;top:137px;font-family:'Liberation Sans', sans-serif;font-size:22px;line-height:22px;color:#43b2e2;font-weight:bold;transform:scaleX(0.9457);transform-origin:0 0;font-style:italic;">m</div>
<div style="left:730px;top:142px;font-family:'Liberation Sans', sans-serif;font-size:15px;line-height:15px;color:#bbbbbb;transform:scaleX(1.0325);transform-origin:0 0;">tutorial116-component</div>
<svg style="left:891px;top:145px;" width="10" height="10" viewBox="0 0 10 10"><path d="M0.5 0.5l9 9M9.5 0.5l-9 9" stroke="#6e6e6e" stroke-width="1.3"/></svg>
<svg style="left:923px;top:140px;" width="20" height="19" viewBox="0 0 20 19"><path d="M7 0.5h9.5v8H3V4.5z" fill="#9aa7b0"/><path d="M3 4.5h4v-4z" fill="#6d777d"/><rect x="0" y="9.8" width="19.5" height="8.8" fill="#3e93b8"/><text x="3.2" y="17.3" font-family="Liberation Sans" font-size="8" fill="#1f2d36">J</text></svg>
<div style="left:946px;top:142px;font-family:'Liberation Sans', sans-serif;font-size:15px;line-height:15px;color:#bbbbbb;transform:scaleX(0.9950);transform-origin:0 0;">package-info.java</div>
<svg style="left:1071px;top:145px;" width="10" height="10" viewBox="0 0 10 10"><path d="M0.5 0.5l9 9M9.5 0.5l-9 9" stroke="#6e6e6e" stroke-width="1.3"/></svg>
<svg style="left:1104px;top:140px;" width="14" height="18" viewBox="0 0 14 18"><path d="M4 0h10v18H0V4z" fill="#9aa7b0"/><path d="M0 4h4V0z" fill="#3b3a36"/><rect x="2" y="6" width="10" height="10" fill="#1e6fa0"/><path d="M2 16l4-5 3 3 3-2v4z" fill="#62b543"/></svg>
<div style="left:1125px;top:142px;font-family:'Liberation Sans', sans-serif;font-size:15px;line-height:15px;color:#bbbbbb;transform:scaleX(0.9865);transform-origin:0 0;">TutorialFamily_icon32.png</div>
<svg style="left:1306px;top:145px;" width="10" height="10" viewBox="0 0 10 10"><path d="M0.5 0.5l9 9M9.5 0.5l-9 9" stroke="#6e6e6e" stroke-width="1.3"/></svg>
<svg style="left:1341px;top:140px;" width="13" height="18" viewBox="0 0 13 18"><path d="M4 0h9v18H0V4z" fill="#9aa7b0"/><path d="M0 4h4V0z" fill="#3b3a36"/><g stroke="#3b3a36" stroke-width="1.2"><path d="M3 8h7M3 11h7M3 14h7"/></g></svg>
<div style="left:1360px;top:142px;font-family:'Liberation Sans', sans-serif;font-size:15px;line-height:15px;color:#bbbbbb;transform:scaleX(0.9961);transform-origin:0 0;">dependencies.txt</div>
<svg style="left:1479px;top:145px;" width="10" height="10" viewBox="0 0 10 10"><path d="M0.5 0.5l9 9M9.5 0.5l-9 9" stroke="#6e6e6e" stroke-width="1.3"/></svg>
<div style="left:493px;top:163px;width:1007px;height:572px;background:#2b2b2b;"></div>
<div style="left:493px;top:163px;width:69px;height:572px;background:#313335;"></div>
<div style="left:563px;top:273.3px;width:8px;height:21.25px;background:#2f2f2f;"></div>
<div style="left:571px;top:273.3px;width:929px;height:21.25px;background:#323232;"></div>
<div style="left:561.5px;top:163px;width:1.5px;height:572px;background:#555555;"></div>
<div style="left:609px;top:464.55px;width:1px;height:63.75px;background:#3b3b3b;"></div>
<div style="left:562px;top:163px;width:938px;height:572px;overflow:hidden;z-index:2">
<div class="cl" style="left:9px;top:-11.20px"><span style="color:#cc7832">import </span><span style="color:#a9b7c6">org.talend.sdk.component.api.processor.OutputEmitter</span><span style="color:#cc7832">;</span></div>
<div class="cl" style="left:9px;top:10.05px"><span style="color:#cc7832">import </span><span style="color:#a9b7c6">org.talend.sdk.component.api.processor.</span><span style="color:#bbb529">Processor</span><span style="color:#cc7832">;</span></div>
<div class="cl" style="left:9px;top:31.30px"><span style="color:#cc7832">import </span><span style="color:#a9b7c6">org.talend.sdk.component.api.record.Record</span><span style="color:#cc7832">;</span></div>
<div class="cl" style="left:9px;top:73.80px"><span style="color:#cc7832">import </span><span style="color:#a9b7c6">com.tutorial116.components.service.Tutorial116ComponentService</span><span style="color:#cc7832">;</span></div>
<div class="cl" style="left:9px;top:116.30px"><span style="color:#bbb529">@Version</span><span style="color:#ffef28">(</span><span style="color:#a0a0a0">1</span><span style="color:#ffef28">)</span><span style="color:#808080"> // default version is 1, if some configuration changes happen between 2 versions you can add a migration handler</span></div>
<div class="cl" style="left:9px;top:137.55px"><span style="color:#bbb529">@Icon</span><span style="color:#a9b7c6">(Icon.IconType.</span><span style="color:#9876aa"><i>STAR</i></span><span style="color:#a9b7c6">) </span><span style="color:#808080">// you can use a custom one using @Icon(value=CUSTOM, custom="filename") and add icon</span></div>
<div class="cl" style="left:9px;top:158.80px"><span style="color:#bbb529">@Processor</span><span style="color:#a9b7c6">(</span><span style="color:#d0d0ff">name</span><span style="color:#a9b7c6"> = </span><span style="color:#6a8759">"Logger"</span><span style="color:#a9b7c6">)</span></div>
<div class="cl" style="left:9px;top:180.05px"><span style="color:#bbb529">@Documentation</span><span style="color:#a9b7c6">(</span><span style="color:#6a8759">"TODO fill the documentation for this processor"</span><span style="color:#a9b7c6">)</span></div>
<div class="cl" style="left:9px;top:201.30px"><span style="color:#cc7832">public class </span><span style="color:#a9b7c6">LoggerProcessor </span><span style="color:#cc7832">implements </span><span style="color:#a9b7c6">Serializable {</span></div>
<div class="cl" style="left:9px;top:222.55px"><span style="color:#a9b7c6">    </span><span style="color:#cc7832">private final </span><span style="color:#a9b7c6">LoggerProcessorConfiguration </span><span style="color:#a0a8a0">configuration</span><span style="color:#cc7832">;</span></div>
<div class="cl" style="left:9px;top:243.80px"><span style="color:#a9b7c6">    </span><span style="color:#cc7832">private final </span><span style="color:#a9b7c6">Tutorial116ComponentService </span><span style="color:#a0a8a0">service</span><span style="color:#cc7832">;</span></div>
<div class="cl" style="left:9px;top:286.30px"><span style="color:#a9b7c6">    </span><span style="color:#cc7832">public </span><span style="color:#a9b7c6">LoggerProcessor(</span><span style="color:#bbb529">@Option</span><span style="color:#a9b7c6">(</span><span style="color:#6a8759">"configuration"</span><span style="color:#a9b7c6">) </span><span style="color:#cc7832">final </span><span style="color:#a9b7c6">LoggerProcessorConfiguration configuration</span><span style="color:#cc7832">,</span></div>
<div class="cl" style="left:9px;top:307.55px"><span style="color:#a9b7c6">                          </span><span style="color:#cc7832">final </span><span style="color:#a9b7c6">Tutorial116ComponentService service) {</span></div>
<div class="cl" style="left:9px;top:328.80px"><span style="color:#a9b7c6">        </span><span style="color:#cc7832">this</span><span style="color:#a9b7c6">.</span><span style="color:#9876aa">configuration</span><span style="color:#a9b7c6"> = configuration</span><span style="color:#cc7832">;</span></div>
<div class="cl" style="left:9px;top:350.05px"><span style="color:#a9b7c6">        </span><span style="color:#cc7832">this</span><span style="color:#a9b7c6">.</span><span style="color:#9876aa">service</span><span style="color:#a9b7c6"> = service</span><span style="color:#cc7832">;</span></div>
<div class="cl" style="left:9px;top:371.30px"><span style="color:#a9b7c6">    }</span></div>
<div class="cl" style="left:9px;top:413.80px"><span style="color:#a9b7c6">    </span><span style="color:#bbb529">@PostConstruct</span></div>
<div class="cl" style="left:9px;top:435.05px"><span style="color:#a9b7c6">    </span><span style="color:#cc7832">public void </span><span style="color:#a9b7c6">init() {</span></div>
<div class="cl" style="left:9px;top:456.30px"><span style="color:#808080">        // this method will be executed once for the whole component execution,</span></div>
<div class="cl" style="left:9px;top:477.55px"><span style="color:#808080">        // this is where you can establish a connection for instance</span></div>
<div class="cl" style="left:9px;top:498.80px"><span style="color:#808080">        // Note: if you don't need it you can delete it</span></div>
<div class="cl" style="left:9px;top:520.05px"><span style="color:#a9b7c6">    }</span></div>
<div class="cl" style="left:9px;top:562.55px"><span style="color:#a9b7c6">    </span><span style="color:#bbb529">@BeforeGroup</span></div>
</div>
<div style="left:493px;top:163px;width:69px;height:572px;overflow:hidden">
<div class="cl" style="left:7.5px;top:-9.60px;color:#606366;font-size:12px;letter-spacing:1.8px">17</div>
<div class="cl" style="left:7.5px;top:11.65px;color:#606366;font-size:12px;letter-spacing:1.8px">18</div>
<div class="cl" style="left:7.5px;top:32.90px;color:#606366;font-size:12px;letter-spacing:1.8px">19</div>
<div class="cl" style="left:7.5px;top:54.15px;color:#606366;font-size:12px;letter-spacing:1.8px">20</div>
<div class="cl" style="left:7.5px;top:75.40px;color:#606366;font-size:12px;letter-spacing:1.8px">21</div>
<div class="cl" style="left:7.5px;top:96.65px;color:#606366;font-size:12px;letter-spacing:1.8px">22</div>
<div class="cl" style="left:7.5px;top:117.90px;color:#606366;font-size:12px;letter-spacing:1.8px">23</div>
<div class="cl" style="left:7.5px;top:139.15px;color:#606366;font-size:12px;letter-spacing:1.8px">24</div>
<div class="cl" style="left:7.5px;top:160.40px;color:#606366;font-size:12px;letter-spacing:1.8px">25</div>
<div class="cl" style="left:7.5px;top:181.65px;color:#606366;font-size:12px;letter-spacing:1.8px">26</div>
<div class="cl" style="left:7.5px;top:202.90px;color:#606366;font-size:12px;letter-spacing:1.8px">27</div>
<div class="cl" style="left:7.5px;top:224.15px;color:#606366;font-size:12px;letter-spacing:1.8px">28</div>
<div class="cl" style="left:7.5px;top:245.40px;color:#606366;font-size:12px;letter-spacing:1.8px">29</div>
<div class="cl" style="left:7.5px;top:266.65px;color:#606366;font-size:12px;letter-spacing:1.8px">30</div>
<div class="cl" style="left:7.5px;top:287.90px;color:#606366;font-size:12px;letter-spacing:1.8px">31</div>
<div class="cl" style="left:7.5px;top:309.15px;color:#606366;font-size:12px;letter-spacing:1.8px">32</div>
<div class="cl" style="left:7.5px;top:330.40px;color:#606366;font-size:12px;letter-spacing:1.8px">33</div>
<div class="cl" style="left:7.5px;top:351.65px;color:#606366;font-size:12px;letter-spacing:1.8px">34</div>
<div class="cl" style="left:7.5px;top:372.90px;color:#606366;font-size:12px;letter-spacing:1.8px">35</div>
<div class="cl" style="left:7.5px;top:394.15px;color:#606366;font-size:12px;letter-spacing:1.8px">36</div>
<div class="cl" style="left:7.5px;top:415.40px;color:#606366;font-size:12px;letter-spacing:1.8px">37</div>
<div class="cl" style="left:7.5px;top:436.65px;color:#606366;font-size:12px;letter-spacing:1.8px">38</div>
<div class="cl" style="left:7.5px;top:457.90px;color:#606366;font-size:12px;letter-spacing:1.8px">39</div>
<div class="cl" style="left:7.5px;top:479.15px;color:#606366;font-size:12px;letter-spacing:1.8px">40</div>
<div class="cl" style="left:7.5px;top:500.40px;color:#606366;font-size:12px;letter-spacing:1.8px">41</div>
<div class="cl" style="left:7.5px;top:521.65px;color:#606366;font-size:12px;letter-spacing:1.8px">42</div>
<div class="cl" style="left:7.5px;top:542.90px;color:#606366;font-size:12px;letter-spacing:1.8px">43</div>
<div class="cl" style="left:7.5px;top:564.15px;color:#606366;font-size:12px;letter-spacing:1.8px">44</div>
</div>
<svg style="left:556px;top:233.60px;" width="13" height="14" viewBox="0 0 13 14"><path d="M0.75 13.25V5.5L6.5 0.75 12.25 5.5V13.25z" fill="#303030" stroke="#6a6a6a" stroke-width="1.4"/><path d="M4 8.5h5" stroke="#7a7a7a" stroke-width="1"/></svg>
<svg style="left:556px;top:278.90px;" width="13" height="14" viewBox="0 0 13 14"><path d="M0.75 0.75H12.25V8.5L6.5 13.25 0.75 8.5z" fill="#303030" stroke="#6a6a6a" stroke-width="1.4"/><path d="M4 5.5h5" stroke="#7a7a7a" stroke-width="1"/></svg>
<svg style="left:556px;top:339.85px;" width="13" height="14" viewBox="0 0 13 14"><path d="M0.75 13.25V5.5L6.5 0.75 12.25 5.5V13.25z" fill="#303030" stroke="#6a6a6a" stroke-width="1.4"/><path d="M4 8.5h5" stroke="#7a7a7a" stroke-width="1"/></svg>
<svg style="left:556px;top:470.15px;" width="13" height="14" viewBox="0 0 13 14"><path d="M0.75 0.75H12.25V8.5L6.5 13.25 0.75 8.5z" fill="#303030" stroke="#6a6a6a" stroke-width="1.4"/><path d="M4 5.5h5" stroke="#7a7a7a" stroke-width="1"/></svg>
<svg style="left:556px;top:531.10px;" width="13" height="14" viewBox="0 0 13 14"><path d="M0.75 13.25V5.5L6.5 0.75 12.25 5.5V13.25z" fill="#303030" stroke="#6a6a6a" stroke-width="1.4"/><path d="M4 8.5h5" stroke="#7a7a7a" stroke-width="1"/></svg>
<svg style="left:556px;top:597.65px;" width="13" height="14" viewBox="0 0 13 14"><path d="M0.75 0.75H12.25V8.5L6.5 13.25 0.75 8.5z" fill="#303030" stroke="#6a6a6a" stroke-width="1.4"/><path d="M4 5.5h5" stroke="#7a7a7a" stroke-width="1"/></svg>
<svg style="left:556px;top:618.90px;" width="13" height="14" viewBox="0 0 13 14"><path d="M0.75 0.75H12.25V8.5L6.5 13.25 0.75 8.5z" fill="#303030" stroke="#6a6a6a" stroke-width="1.4"/><path d="M4 5.5h5" stroke="#7a7a7a" stroke-width="1"/></svg>
<svg style="left:556px;top:658.60px;" width="13" height="14" viewBox="0 0 13 14"><path d="M0.75 13.25V5.5L6.5 0.75 12.25 5.5V13.25z" fill="#303030" stroke="#6a6a6a" stroke-width="1.4"/><path d="M4 8.5h5" stroke="#7a7a7a" stroke-width="1"/></svg>
<svg style="left:556px;top:679.85px;" width="13" height="14" viewBox="0 0 13 14"><path d="M0.75 13.25V5.5L6.5 0.75 12.25 5.5V13.25z" fill="#303030" stroke="#6a6a6a" stroke-width="1.4"/><path d="M4 8.5h5" stroke="#7a7a7a" stroke-width="1"/></svg>
<svg style="left:581px;top:254.75px;" width="14" height="19" viewBox="0 0 14 19"><defs><radialGradient id="lb" cx="50%" cy="40%" r="60%"><stop offset="0" stop-color="#ffe0a0"/><stop offset="1" stop-color="#f0a830"/></radialGradient></defs><path d="M7 0.5a6.3 6.3 0 0 1 4 11.2V13H3v-1.3A6.3 6.3 0 0 1 7 0.5z" fill="url(#lb)"/><path d="M4 6l3 3 3-3M7 9v4" stroke="#f8d890" stroke-width="0.9" fill="none"/><rect x="3" y="13.5" width="8" height="4.5" rx="1.5" fill="#7b7b7b"/></svg>
<div style="left:643px;top:273.3px;width:9px;height:21.25px;background:#3b514d;z-index:1"></div>
<div style="left:661px;top:273.3px;width:9px;height:21.25px;background:#3b514d;z-index:1"></div>
<div style="left:994px;top:379.55px;width:117px;height:21.25px;background:#52503a;z-index:1"></div>
<div style="left:985px;top:400.8px;width:63px;height:21.25px;background:#52503a;z-index:1"></div>
<svg style="left:652px;top:290.50px;z-index:3" width="9" height="3" viewBox="0 0 9 3"><polyline points="0,2.5 2,0.5 4,2.5 6,0.5 8,2.5" fill="none" stroke="#a0a0a0" stroke-width="0.9"/></svg>
<svg style="left:688px;top:375.50px;z-index:3" width="135" height="3" viewBox="0 0 135 3"><polyline points="0,2.5 2,0.5 4,2.5 6,0.5 8,2.5 10,0.5 12,2.5 14,0.5 16,2.5 18,0.5 20,2.5 22,0.5 24,2.5 26,0.5 28,2.5 30,0.5 32,2.5 34,0.5 36,2.5 38,0.5 40,2.5 42,0.5 44,2.5 46,0.5 48,2.5 50,0.5 52,2.5 54,0.5 56,2.5 58,0.5 60,2.5 62,0.5 64,2.5 66,0.5 68,2.5 70,0.5 72,2.5 74,0.5 76,2.5 78,0.5 80,2.5 82,0.5 84,2.5 86,0.5 88,2.5 90,0.5 92,2.5 94,0.5 96,2.5 98,0.5 100,2.5 102,0.5 104,2.5 106,0.5 108,2.5 110,0.5 112,2.5 114,0.5 116,2.5 118,0.5 120,2.5 122,0.5 124,2.5 126,0.5 128,2.5 130,0.5 132,2.5 134,0.5" fill="none" stroke="#8c8c8c" stroke-width="0.9"/></svg>
<svg style="left:994px;top:396.75px;z-index:3" width="117" height="3" viewBox="0 0 117 3"><polyline points="0,2.5 2,0.5 4,2.5 6,0.5 8,2.5 10,0.5 12,2.5 14,0.5 16,2.5 18,0.5 20,2.5 22,0.5 24,2.5 26,0.5 28,2.5 30,0.5 32,2.5 34,0.5 36,2.5 38,0.5 40,2.5 42,0.5 44,2.5 46,0.5 48,2.5 50,0.5 52,2.5 54,0.5 56,2.5 58,0.5 60,2.5 62,0.5 64,2.5 66,0.5 68,2.5 70,0.5 72,2.5 74,0.5 76,2.5 78,0.5 80,2.5 82,0.5 84,2.5 86,0.5 88,2.5 90,0.5 92,2.5 94,0.5 96,2.5 98,0.5 100,2.5 102,0.5 104,2.5 106,0.5 108,2.5 110,0.5 112,2.5 114,0.5 116,2.5" fill="none" stroke="#a09d80" stroke-width="0.9"/></svg>
<svg style="left:985px;top:418.00px;z-index:3" width="63" height="3" viewBox="0 0 63 3"><polyline points="0,2.5 2,0.5 4,2.5 6,0.5 8,2.5 10,0.5 12,2.5 14,0.5 16,2.5 18,0.5 20,2.5 22,0.5 24,2.5 26,0.5 28,2.5 30,0.5 32,2.5 34,0.5 36,2.5 38,0.5 40,2.5 42,0.5 44,2.5 46,0.5 48,2.5 50,0.5 52,2.5 54,0.5 56,2.5 58,0.5 60,2.5 62,0.5" fill="none" stroke="#a09d80" stroke-width="0.9"/></svg>
<svg style="left:670px;top:460.50px;z-index:3" width="135" height="3" viewBox="0 0 135 3"><polyline points="0,2.5 2,0.5 4,2.5 6,0.5 8,2.5 10,0.5 12,2.5 14,0.5 16,2.5 18,0.5 20,2.5 22,0.5 24,2.5 26,0.5 28,2.5 30,0.5 32,2.5 34,0.5 36,2.5 38,0.5 40,2.5 42,0.5 44,2.5 46,0.5 48,2.5 50,0.5 52,2.5 54,0.5 56,2.5 58,0.5 60,2.5 62,0.5 64,2.5 66,0.5 68,2.5 70,0.5 72,2.5 74,0.5 76,2.5 78,0.5 80,2.5 82,0.5 84,2.5 86,0.5 88,2.5 90,0.5 92,2.5 94,0.5 96,2.5 98,0.5 100,2.5 102,0.5 104,2.5 106,0.5 108,2.5 110,0.5 112,2.5 114,0.5 116,2.5 118,0.5 120,2.5 122,0.5 124,2.5 126,0.5 128,2.5 130,0.5 132,2.5 134,0.5" fill="none" stroke="#8c8c8c" stroke-width="0.9"/></svg>
<svg style="left:715px;top:609.25px;z-index:3" width="36" height="3" viewBox="0 0 36 3"><polyline points="0,2.5 2,0.5 4,2.5 6,0.5 8,2.5 10,0.5 12,2.5 14,0.5 16,2.5 18,0.5 20,2.5 22,0.5 24,2.5 26,0.5 28,2.5 30,0.5 32,2.5 34,0.5 36,2.5" fill="none" stroke="#8c8c8c" stroke-width="0.9"/></svg>
<div style="left:571px;top:723px;width:609px;height:10px;background:rgba(120,120,120,0.45);z-index:4"></div>
<div style="left:1489px;top:304px;width:10px;height:187px;background:rgba(95,95,95,0.85);z-index:4"></div>
<div style="left:1486px;top:166px;width:12px;height:12px;background:#d4a020;"></div>
<div style="left:1483px;top:341px;width:16px;height:2px;background:#c8a02a;"></div>
<div style="left:1483px;top:369px;width:16px;height:2px;background:#c8a02a;"></div>
<div style="left:1483px;top:376.5px;width:16px;height:2px;background:#c8a02a;"></div>
<div style="left:1483px;top:384px;width:16px;height:2px;background:#c8a02a;"></div>
<div style="left:1483px;top:398px;width:16px;height:2px;background:#c8a02a;"></div>
<div style="left:1483px;top:447px;width:16px;height:2px;background:#c8a02a;"></div>
<div style="left:1483px;top:549.5px;width:16px;height:2px;background:#c8a02a;"></div>
<div style="left:1483px;top:555.5px;width:16px;height:2px;background:#c8a02a;"></div>
<div style="left:1483px;top:563px;width:16px;height:2px;background:#c8a02a;"></div>
<div style="left:1483px;top:613px;width:16px;height:2px;background:#c8a02a;"></div>
<div style="left:1483px;top:656.5px;width:16px;height:2px;background:#c8a02a;"></div>
<div style="left:1483px;top:499px;width:16px;height:3px;background:#c8a02a;"></div>
<div style="left:493px;top:735px;width:1007px;height:28px;background:#313335;"></div>
<div style="left:493px;top:735px;width:1007px;height:1px;background:#383a3c;"></div>
<div style="left:575px;top:744px;font-family:'Liberation Sans', sans-serif;font-size:15px;line-height:15px;color:#bbbbbb;transform:scaleX(0.9540);transform-origin:0 0;">LoggerProcessor</div>
<div style="left:1500px;top:133px;width:2px;height:630px;background:#4a4c4e;"></div>
<div style="left:1502px;top:133px;width:26px;height:630px;background:#3c3f41;"></div>
<div style="left:1506px;top:145px;font-family:'Liberation Sans', sans-serif;font-size:20px;line-height:20px;color:#43b2e2;font-weight:bold;transform:scaleX(0.9279);transform-origin:0 0;font-style:italic;">m</div>
<div style="left:1521.7px;top:168px;font-family:'Liberation Sans';font-size:14px;line-height:14px;color:#bbbbbb;white-space:nowrap;transform-origin:0 0;transform:rotate(90deg) scaleX(0.9227)">Maven Projects</div>
<svg style="left:1505px;top:291px;" width="18" height="17" viewBox="0 0 18 17"><ellipse cx="9" cy="4" rx="2.5" ry="2.5" fill="#b07bd8"/><ellipse cx="9" cy="9" rx="3" ry="2.5" fill="#b07bd8"/><ellipse cx="9" cy="13.5" rx="3.5" ry="3" fill="#b07bd8"/><path d="M2 6l4 2M16 6l-4 2M1 10h5M17 10h-5M2 15l4-2M16 15l-4-2M6 0l2 2M12 0l-2 2" stroke="#9aa7b0" stroke-width="1"/></svg>
<div style="left:1521.7px;top:312px;font-family:'Liberation Sans';font-size:14px;line-height:14px;color:#bbbbbb;white-space:nowrap;transform-origin:0 0;transform:rotate(90deg) scaleX(0.9281)">Ant Build</div>
<div style="left:0px;top:763px;width:1528px;height:2px;background:#4b4d4f;"></div>
<div style="left:0px;top:765px;width:1528px;height:27px;background:#3c3f41;"></div>
<div style="left:0px;top:792px;width:1528px;height:1px;background:#46484a;"></div>
<svg style="left:38px;top:771px;" width="16" height="16" viewBox="0 0 16 16"><rect x="0" y="0" width="16" height="16" fill="#9aa7b0"/><rect x="1" y="3" width="14" height="12" fill="#000"/><path d="M3 6l3 2-3 2" stroke="#fff" stroke-width="1.1" fill="none"/><path d="M7 12h4" stroke="#fff" stroke-width="1.1"/></svg>
<div style="left:59px;top:774px;font-family:'Liberation Sans', sans-serif;font-size:14px;line-height:14px;color:#bbbbbb;transform:scaleX(0.9835);transform-origin:0 0;">Terminal</div>
<svg style="left:136px;top:771px;" width="17" height="16" viewBox="0 0 17 16"><circle cx="5" cy="4.5" r="4.2" fill="#e0e0e0"/><path d="M3 3.5h4M3 5.5h4" stroke="#555" stroke-width="0.8"/><circle cx="10.5" cy="8.5" r="4.5" fill="#f4c490"/><path d="M6 6.5a4.5 4.5 0 0 1 9 0z" fill="#555"/><path d="M4.5 16a6 3 0 0 1 12 0z" fill="#3592c4"/></svg>
<div style="left:158px;top:774px;font-family:'Liberation Sans', sans-serif;font-size:14px;line-height:14px;color:#bbbbbb;transform:scaleX(0.9550);transform-origin:0 0;"><u>6</u>: TODO</div>
<svg style="left:1404px;top:769px;" width="21" height="19" viewBox="0 0 21 19"><circle cx="9" cy="9" r="9" fill="#5fb95c"/><path d="M12 15l7 4-3-7z" fill="#5fb95c"/><text x="5.5" y="13.5" font-family="Liberation Sans" font-size="11" fill="#1a1a1a">1</text></svg>
<div style="left:1429px;top:774px;font-family:'Liberation Sans', sans-serif;font-size:14px;line-height:14px;color:#bbbbbb;transform:scaleX(0.9678);transform-origin:0 0;">Event Log</div>
<div style="left:0px;top:793px;width:1528px;height:26px;background:#3c3f41;"></div>
<div style="left:10px;top:798px;width:18px;height:17px;background:transparent;border:1.5px solid #9a9a9a;box-sizing:border-box;background:#5a5a5a"></div>
<div style="left:10px;top:814px;width:18px;height:1.5px;background:#9a9a9a;"></div>
<div style="left:38px;top:799px;font-family:'Liberation Sans', sans-serif;font-size:15px;line-height:15px;color:#bbbbbb;transform:scaleX(0.9725);transform-origin:0 0;">IDE and Plugin Updates: IntelliJ IDEA is ready to update. (yesterday 4:29 PM)</div>
<div style="left:1324px;top:799px;font-family:'Liberation Sans', sans-serif;font-size:15px;line-height:15px;color:#bbbbbb;transform:scaleX(0.9854);transform-origin:0 0;">23:12</div>
<div style="left:1374px;top:799px;font-family:'Liberation Sans', sans-serif;font-size:15px;line-height:15px;color:#bbbbbb;transform:scaleX(0.9143);transform-origin:0 0;">LF</div>
<svg style="left:1390px;top:802px;" width="7" height="11" viewBox="0 0 7 11"><path d="M0.5 4.3L3.5 0.5 6.5 4.3zM0.5 6.5h6l-3 3.8z" fill="#a0a0a0"/></svg>
<div style="left:1411px;top:799px;font-family:'Liberation Sans', sans-serif;font-size:15px;line-height:15px;color:#bbbbbb;transform:scaleX(0.8944);transform-origin:0 0;">UTF-8</div>
<svg style="left:1451px;top:802px;" width="7" height="11" viewBox="0 0 7 11"><path d="M0.5 4.3L3.5 0.5 6.5 4.3zM0.5 6.5h6l-3 3.8z" fill="#a0a0a0"/></svg>
<svg style="left:1475px;top:802px;" width="12" height="11" viewBox="0 0 12 11"><path d="M1.5 5V3a3 3 0 0 1 6 0" stroke="#9d9d9d" stroke-width="1.5" fill="none"/><rect x="3" y="5" width="9" height="6" fill="#9d9d9d"/><rect x="6.5" y="7" width="2" height="3" fill="#3c3f41"/></svg>
<svg style="left:1504px;top:797px;" width="16" height="19" viewBox="0 0 16 19"><path d="M3.5 6.5V3.5a4.5 3 0 0 1 9 0v3z" fill="#8a8a8a"/><rect x="7" y="2.5" width="2" height="2" fill="#3c3f41"/><rect x="0" y="6.2" width="16" height="1.6" fill="#8a8a8a"/><path d="M2.5 8.5v2l3 4h5l3-4v-2" fill="none" stroke="#8a8a8a" stroke-width="1.4"/><path d="M5.5 11a2.5 1.5 0 0 1 5 0" fill="none" stroke="#8a8a8a" stroke-width="1.2"/><path d="M2.5 18.5l2-3h3l-1 3zM13.5 18.5l-2-3h-3l1 3z" fill="#8a8a8a"/></svg></body></html>
